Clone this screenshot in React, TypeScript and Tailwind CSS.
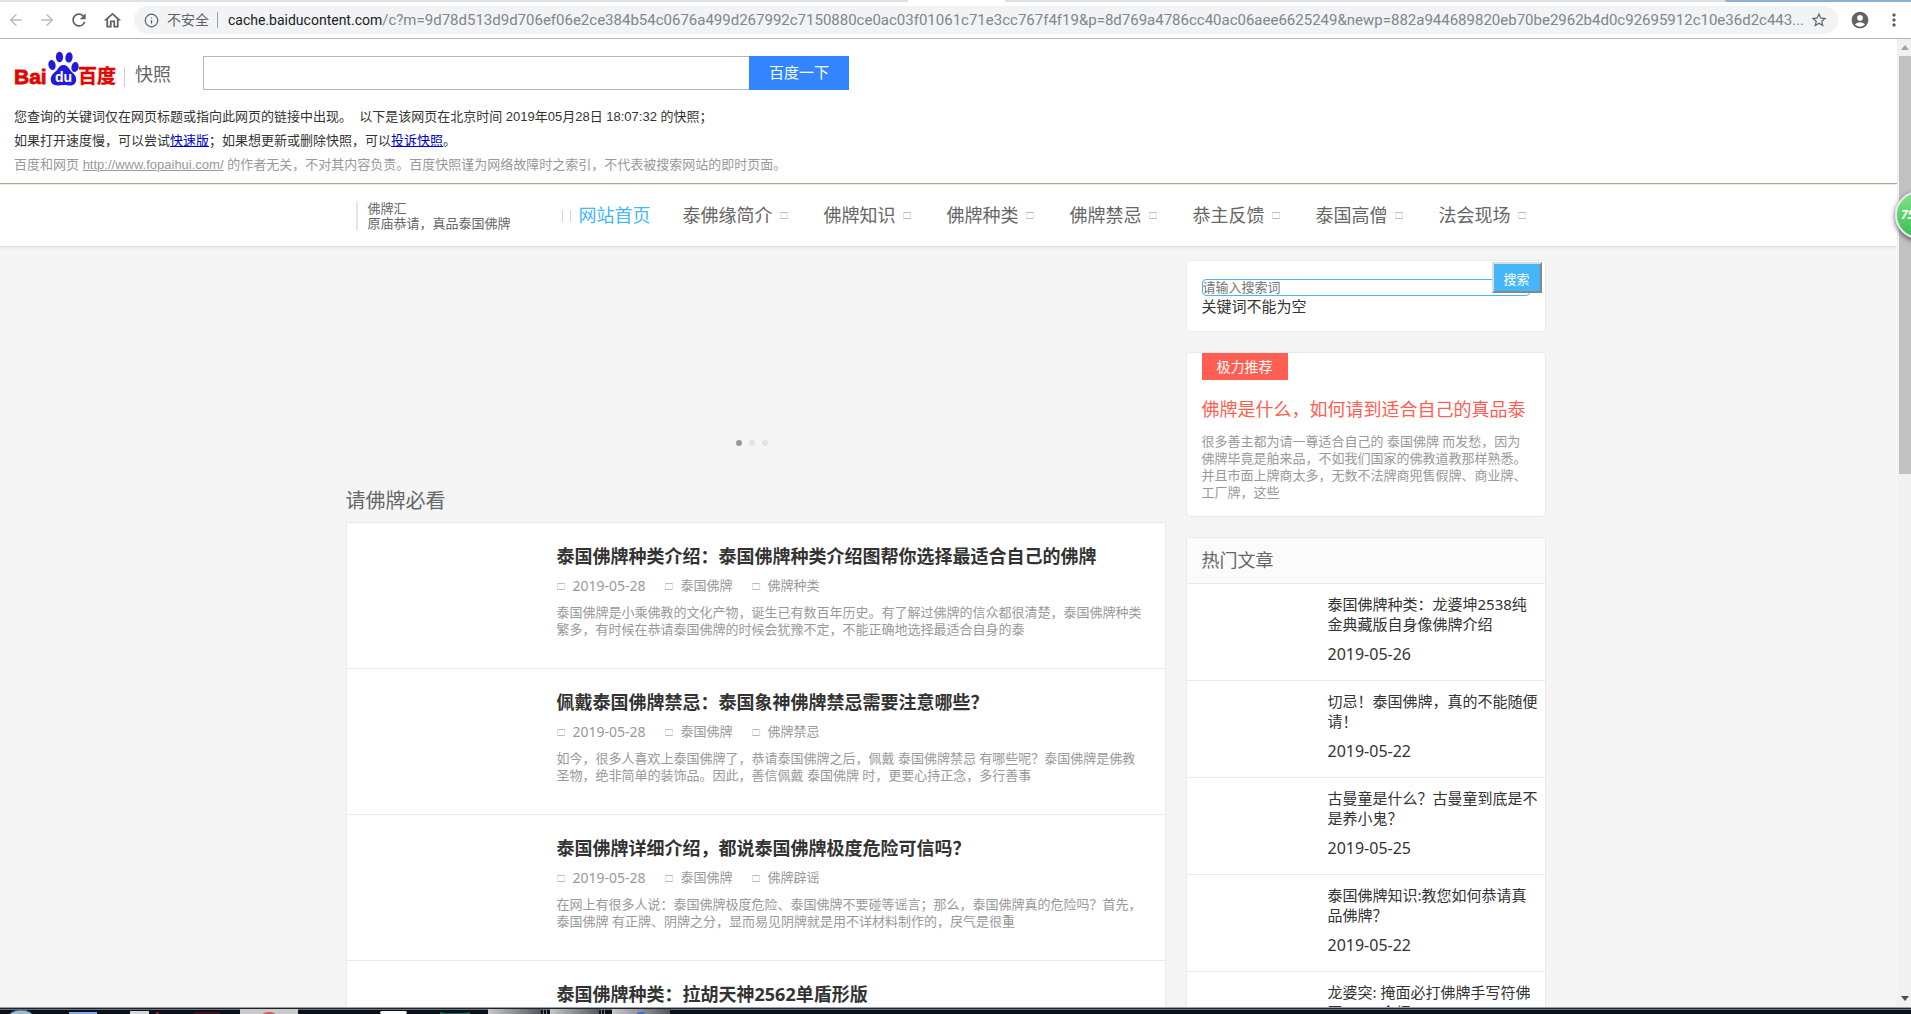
import { useState } from 'react';
import type { FormEvent } from 'react';
import { ArrowLeft, ArrowRight, Info } from 'lucide-react';
import { MdAccountCircle, MdMoreVert, MdOutlineHome, MdRefresh, MdStarBorder } from 'react-icons/md';

type Article = {
  title: string;
  date: string;
  tag: string;
  category: string;
  summary: string;
};

const navItems = ['泰佛缘简介', '佛牌知识', '佛牌种类', '佛牌禁忌', '恭主反馈', '泰国高僧', '法会现场'];

const articles: Article[] = [
  {
    title: '泰国佛牌种类介绍：泰国佛牌种类介绍图帮你选择最适合自己的佛牌',
    date: '2019-05-28',
    tag: '泰国佛牌',
    category: '佛牌种类',
    summary:
      '泰国佛牌是小乘佛教的文化产物，诞生已有数百年历史。有了解过佛牌的信众都很清楚，泰国佛牌种类繁多，有时候在恭请泰国佛牌的时候会犹豫不定，不能正确地选择最适合自身的泰',
  },
  {
    title: '佩戴泰国佛牌禁忌：泰国象神佛牌禁忌需要注意哪些？',
    date: '2019-05-28',
    tag: '泰国佛牌',
    category: '佛牌禁忌',
    summary:
      '如今，很多人喜欢上泰国佛牌了，恭请泰国佛牌之后，佩戴 泰国佛牌禁忌 有哪些呢？泰国佛牌是佛教圣物，绝非简单的装饰品。因此，善信佩戴 泰国佛牌 时，更要心持正念，多行善事',
  },
  {
    title: '泰国佛牌详细介绍，都说泰国佛牌极度危险可信吗？',
    date: '2019-05-28',
    tag: '泰国佛牌',
    category: '佛牌辟谣',
    summary:
      '在网上有很多人说：泰国佛牌极度危险、泰国佛牌不要碰等谣言；那么，泰国佛牌真的危险吗？首先，泰国佛牌 有正牌、阴牌之分，显而易见阴牌就是用不详材料制作的，戾气是很重',
  },
  {
    title: '泰国佛牌种类：拉胡天神2562单盾形版',
    date: '2019-05-28',
    tag: '泰国佛牌',
    category: '佛牌种类',
    summary: '',
  },
];

const hotArticles = [
  { title: '泰国佛牌种类：龙婆坤2538纯金典藏版自身像佛牌介绍', date: '2019-05-26' },
  { title: '切忌！泰国佛牌，真的不能随便请！', date: '2019-05-22' },
  { title: '古曼童是什么？古曼童到底是不是养小鬼？', date: '2019-05-25' },
  { title: '泰国佛牌知识:教您如何恭请真品佛牌？', date: '2019-05-22' },
  { title: '龙婆突: 掩面必打佛牌手写符佛国2555 介绍', date: '2019-05-22' },
];

// icon font is missing on the cached page, so every icon shows as an empty box
function MissingGlyph() {
  return <i className="inline-block h-[7px] w-2 shrink-0 border border-x-[#ecdfe0] border-y-[#bbb]" />;
}

function BrowserBar() {
  return (
    <div className="shrink-0 border-b border-[#b4b4b4] bg-white">
      <div className="flex h-[2px] bg-[#dee1e6]">
        <div className="ml-[47.5%] w-[97px] bg-white" />
        <div className="ml-auto w-[186px] rounded-bl bg-[#8eaed0]" />
      </div>
      <div className="flex h-9 items-center text-[#5f6368]">
        <div className="flex w-[134px] shrink-0 items-center justify-around pr-1">
          <button type="button" aria-label="后退" className="text-[#babcbe]">
            <ArrowLeft size={18} />
          </button>
          <button type="button" aria-label="前进" className="text-[#babcbe]">
            <ArrowRight size={18} />
          </button>
          <button type="button" aria-label="刷新">
            <MdRefresh size={20} />
          </button>
          <button type="button" aria-label="主页">
            <MdOutlineHome size={21} />
          </button>
        </div>
        <div className="flex h-7 min-w-0 flex-1 items-center rounded-full bg-[#f1f3f4] pr-2.5 pl-2.5">
          <Info size={15} className="shrink-0" />
          <span className="ml-2 shrink-0 text-sm">不安全</span>
          <span className="ml-2 h-4 w-px shrink-0 bg-[#9aa0a6]" />
          <span className="ml-2.5 min-w-0 flex-1 truncate font-['Roboto','Noto_Sans',sans-serif] text-[15px] text-[#80868b]">
            <span className="text-sm text-[#202124]">cache.baiducontent.com</span>
            /c?m=9d78d513d9d706ef06e2ce384b54c0676a499d267992c7150880ce0ac03f01061c71e3cc767f4f19&amp;p=8d769a4786cc40ac06aee6625249&amp;newp=882a944689820eb70be2962b4d0c92695912c10e36d2c443...
          </span>
          <button type="button" aria-label="收藏" className="shrink-0">
            <MdStarBorder size={18} />
          </button>
        </div>
        <div className="flex w-[73px] shrink-0 items-center gap-3.5 pl-3">
          <button type="button" aria-label="用户">
            <MdAccountCircle size={20} />
          </button>
          <button type="button" aria-label="更多">
            <MdMoreVert size={20} />
          </button>
        </div>
      </div>
    </div>
  );
}

function BaiduLogo() {
  return (
    <svg width="102" height="36" viewBox="0 0 102 36" role="img" aria-label="百度">
      <g fill="#e10602" stroke="#e10602" fontWeight="700">
        <text x="0" y="33" fontSize="21" strokeWidth="0.8" fontFamily="'Liberation Sans', sans-serif">Bai</text>
        <text x="64" y="32" fontSize="19" strokeWidth="0.4" fontFamily="'Noto Sans CJK SC', sans-serif">百度</text>
      </g>
      <g fill="#2319dc">
        <ellipse cx="38" cy="14" rx="3.6" ry="5" transform="rotate(-12 38 14)" />
        <ellipse cx="45.5" cy="6" rx="3.6" ry="5.2" />
        <ellipse cx="55" cy="6.4" rx="3.6" ry="5.2" transform="rotate(8 55 6.4)" />
        <ellipse cx="61" cy="16" rx="3.6" ry="5" transform="rotate(12 61 16)" />
        <path d="M49.500 14c-3.500 0-4.700 2.600-6.500 5-2 2.600-6.300 4.400-6.300 9.300 0 4.200 3 6.200 6.500 6.200 2.500 0 4-.5 6.500-.5s4 .5 6.500.5c3.600 0 6-2.100 6-6 0-4.800-4-6.800-6.100-9.500C54.300 16.500 53 14 49.500 14z" />
      </g>
      <text x="41" y="31" fill="#fff" fontSize="14" fontWeight="700" fontFamily="'Liberation Sans', sans-serif">du</text>
    </svg>
  );
}

function SnapshotHeader() {
  const [word, setWord] = useState('');

  return (
    <header className="border-b border-[#aca899] bg-white px-3.5 pt-3 pb-1.5 font-['Liberation_Sans','Noto_Sans_CJK_SC',sans-serif] text-[13px] leading-6 text-[#333]">
      <div className="flex items-start">
        <div className="flex w-[189px] items-end">
          <BaiduLogo />
          <span className="ml-2 h-5 w-px bg-[#ccc]" />
          <span className="ml-2.5 text-[18px] leading-6 text-[#666]">快照</span>
        </div>
        <form className="mt-[5px] flex" onSubmit={(e: FormEvent) => e.preventDefault()}>
          <input
            type="text"
            aria-label="百度搜索"
            value={word}
            onChange={(e) => setWord(e.target.value)}
            className="h-[34px] w-[546px] border border-r-0 border-[#b6b6b6] bg-white px-2 text-base outline-none"
          />
          <button type="submit" className="h-[34px] w-[100px] bg-[#3385ff] text-[15px] text-white">
            百度一下
          </button>
        </form>
      </div>
      <div className="mt-[15px]">
        <p>您查询的关键词仅在网页标题或指向此网页的链接中出现。 &nbsp;以下是该网页在北京时间 2019年05月28日 18:07:32 的快照；</p>
        <p>
          如果打开速度慢，可以尝试<a href="#fast" className="text-[#00c] underline">快速版</a>
          ；如果想更新或删除快照，可以<a href="#complain" className="text-[#00c] underline">投诉快照</a>。
        </p>
        <p className="text-[#999]">
          百度和网页 <a href="#site" className="underline">http://www.fopaihui.com/</a>{' '}
          的作者无关，不对其内容负责。百度快照谨为网络故障时之索引，不代表被搜索网站的即时页面。
        </p>
      </div>
    </header>
  );
}

function SiteNav() {
  return (
    <div className="border-t border-[#ece9d8] bg-white pr-1.5 shadow-sm">
      <div className="mx-auto flex h-[61px] max-w-[1200px] items-center pl-2.5 text-[#666]">
        <div className="flex w-[206px] shrink-0 items-center border-l-2 border-[#e6e6e6] pl-2.5 text-[13px] leading-[15px]">
          <p>
            佛牌汇
            <br />
            原庙恭请，真品泰国佛牌
          </p>
        </div>
        <nav className="flex items-center text-[18px] whitespace-nowrap">
          <a href="#home" className="mr-8 flex items-center gap-2 text-[#45b6f7]">
            <i className="h-3 w-[9px] border-x border-[#c9d4ee]" />
            网站首页
          </a>
          {navItems.map((item) => (
            <a key={item} href={`#${item}`} className="mr-9 flex items-center gap-[7px]">
              {item}
              <MissingGlyph />
            </a>
          ))}
        </nav>
      </div>
    </div>
  );
}

function ArticleRow({ article }: { article: Article }) {
  return (
    <article className="h-[146px] border-b border-[#eaeaea] pt-[21px] pr-5 pl-[210px]">
      <h3 className="text-[18px] leading-6 font-bold text-[#333]">
        <a href="#article">{article.title}</a>
      </h3>
      <div className="mt-2 flex h-5 items-center gap-[19px] text-[13px] text-[#999]">
        <span className="flex items-center gap-2">
          <MissingGlyph />
          <time className="text-sm">{article.date}</time>
        </span>
        <span className="flex items-center gap-2">
          <MissingGlyph />
          {article.tag}
        </span>
        <span className="flex items-center gap-2">
          <MissingGlyph />
          {article.category}
        </span>
      </div>
      {article.summary && (
        <p className="mt-2 text-[13px] leading-[17px] text-[#999]">{article.summary}</p>
      )}
    </article>
  );
}

function Sidebar() {
  const [keyword, setKeyword] = useState('');

  return (
    <aside className="w-[360px] shrink-0">
      <form
        className="relative h-[72px] rounded border border-[#eaeaea] bg-white px-[15px] pt-[18px]"
        onSubmit={(e: FormEvent) => e.preventDefault()}
      >
        <input
          type="text"
          aria-label="搜索词"
          placeholder="请输入搜索词"
          value={keyword}
          onChange={(e) => setKeyword(e.target.value)}
          className="block h-[17px] w-full rounded border border-[#45b6f7] pb-0.5 text-[13px] leading-[15px] outline-none placeholder:text-[#757575]"
        />
        <p className="text-[15px] leading-5 text-[#333]">关键词不能为空</p>
        <button
          type="submit"
          className="absolute top-px right-[3px] h-[31px] w-[50px] border-2 border-t-[#ddd] border-r-[#888] border-b-[#888] border-l-[#ddd] bg-[#45b6f7] pt-1 text-[13px] text-white"
        >
          搜索
        </button>
      </form>

      <section className="mt-5 h-[165px] rounded border border-[#eaeaea] bg-white px-[15px]">
        <strong className="flex h-[27px] w-[86px] items-center justify-center bg-[#ff5e52] text-sm font-normal text-white">
          极力推荐
        </strong>
        <h2 className="mt-[17px] text-[18px] leading-6 whitespace-nowrap text-[#ff5e52]">
          <a href="#recommend">佛牌是什么，如何请到适合自己的真品泰</a>
        </h2>
        <p className="mt-3 text-[13px] leading-[17px] text-[#999]">
          很多善主都为请一尊适合自己的 泰国佛牌 而发愁，因为佛牌毕竟是舶来品，不如我们国家的佛教道教那样熟悉。并且市面上牌商太多，无数不法牌商兜售假牌、商业牌、工厂牌，这些
        </p>
      </section>

      <section className="mt-5 rounded border border-[#eaeaea] bg-white">
        <h2 className="border-b border-[#eaeaea] bg-[#fbfbfb] px-[15px] py-[11px] text-[18px] leading-[23px] text-[#666]">
          热门文章
        </h2>
        <ul>
          {hotArticles.map((item) => (
            <li key={item.title} className="h-[97px] border-b border-[#eaeaea] pt-2.5 pr-1 pl-[141px] text-[15px] leading-5 text-[#333]">
              <a href="#hot" className="block">{item.title}</a>
              <time className="mt-2.5 block text-base leading-5">{item.date}</time>
            </li>
          ))}
        </ul>
      </section>
    </aside>
  );
}

function Scrollbar() {
  return (
    <div className="flex w-3.5 shrink-0 flex-col items-end bg-[#f1f1f1] text-[#505050]">
      <svg width="12" height="17" viewBox="0 0 12 17" aria-hidden="true">
        <path d="M2 11l4-5 4 5z" fill="#a3a3a3" />
      </svg>
      <div className="h-[418px] w-3 bg-[#c1c1c1]" />
      <svg width="12" height="17" viewBox="0 0 12 17" className="mt-auto" aria-hidden="true">
        <path d="M2 6h8l-4 5z" fill="currentColor" />
      </svg>
    </div>
  );
}

function Taskbar() {
  return (
    <footer className="h-[7px] shrink-0 overflow-hidden border-t border-[#98a2ae] bg-[#0c1119]">
      <svg width="100%" height="6" aria-hidden="true">
        <defs>
          <linearGradient id="taskButton" x1="0" x2="1" y1="0" y2="0">
            <stop offset="0" stopColor="#c8c8ca" />
            <stop offset="1" stopColor="#55585f" />
          </linearGradient>
        </defs>
        <rect width="100%" height="1" fill="#1b232d" />
        <rect y="1" width="100%" height="1" fill="#66717d" />
        <ellipse cx="21" cy="10" rx="13" ry="8" fill="#9fb9cf" stroke="#3e668a" />
        <rect x="69" y="4" width="28" height="2" fill="#7fb0e6" />
        <rect x="130" y="3" width="19" height="3" fill="#d7d7d7" />
        <rect x="156" y="4" width="3" height="2" fill="#a02020" />
        <rect x="194" y="4" width="26" height="2" fill="#3f1218" />
        <rect x="240" y="1" width="58" height="5" fill="#c9c9cb" />
        <ellipse cx="269" cy="7" rx="7" ry="3" fill="#d1594f" />
        <rect x="380" y="3" width="27" height="3" rx="2" fill="#fff" />
        <path d="M440 4l6 1h17l7-1v2h-30z" fill="#17604f" />
        <rect x="488" y="1" width="53" height="5" fill="url(#taskButton)" />
        <path d="M543.500 1v5M546.500 1v5" stroke="#777b82" />
        <rect x="550" y="1" width="49" height="5" fill="url(#taskButton)" />
        <path d="M601.500 1v5M604.500 1v5" stroke="#777b82" />
        <rect x="612" y="1" width="58" height="5" fill="url(#taskButton)" />
        <ellipse cx="641" cy="6" rx="4" ry="2" fill="#2d6fe0" />
      </svg>
    </footer>
  );
}

export default function App() {
  return (
    <div className="relative flex h-screen flex-col overflow-hidden bg-[#f5f5f5] font-['Noto_Sans','Noto_Sans_CJK_SC',sans-serif]">
      <BrowserBar />
      <div className="flex min-h-0 flex-1">
        <div className="min-w-0 flex-1 overflow-hidden">
          <SnapshotHeader />
          <SiteNav />
          <main className="pr-1.5">
            <div className="mx-auto flex max-w-[1200px] gap-5 pt-3.5">
              <div className="min-w-0 flex-1">
                <div className="flex h-[186px] items-end justify-center gap-[7px] pr-[7px]">
                  <span className="size-1.5 rounded-full bg-[#999]" />
                  <span className="size-1.5 rounded-full bg-[#e2e2e2]" />
                  <span className="size-1.5 rounded-full bg-[#e2e2e2]" />
                </div>
                <h2 className="mt-10 text-[20px] leading-[30px] text-[#666]">请佛牌必看</h2>
                <div className="mt-1.5 border border-[#eaeaea] bg-white">
                  {articles.map((article) => (
                    <ArticleRow key={article.title} article={article} />
                  ))}
                </div>
              </div>
              <Sidebar />
            </div>
          </main>
        </div>
        <Scrollbar />
      </div>
      <Taskbar />

      {/* floating speed ball, half off the right edge */}
      <div className="absolute top-[191px] -right-8 flex size-12 items-center rounded-full border-2 border-[#e8e8e8] bg-linear-to-b from-[#7fe08a] to-[#35c04f] pl-1 text-xs font-bold text-white italic shadow-[0_2px_5px_#555]">
        75
      </div>
    </div>
  );
}
